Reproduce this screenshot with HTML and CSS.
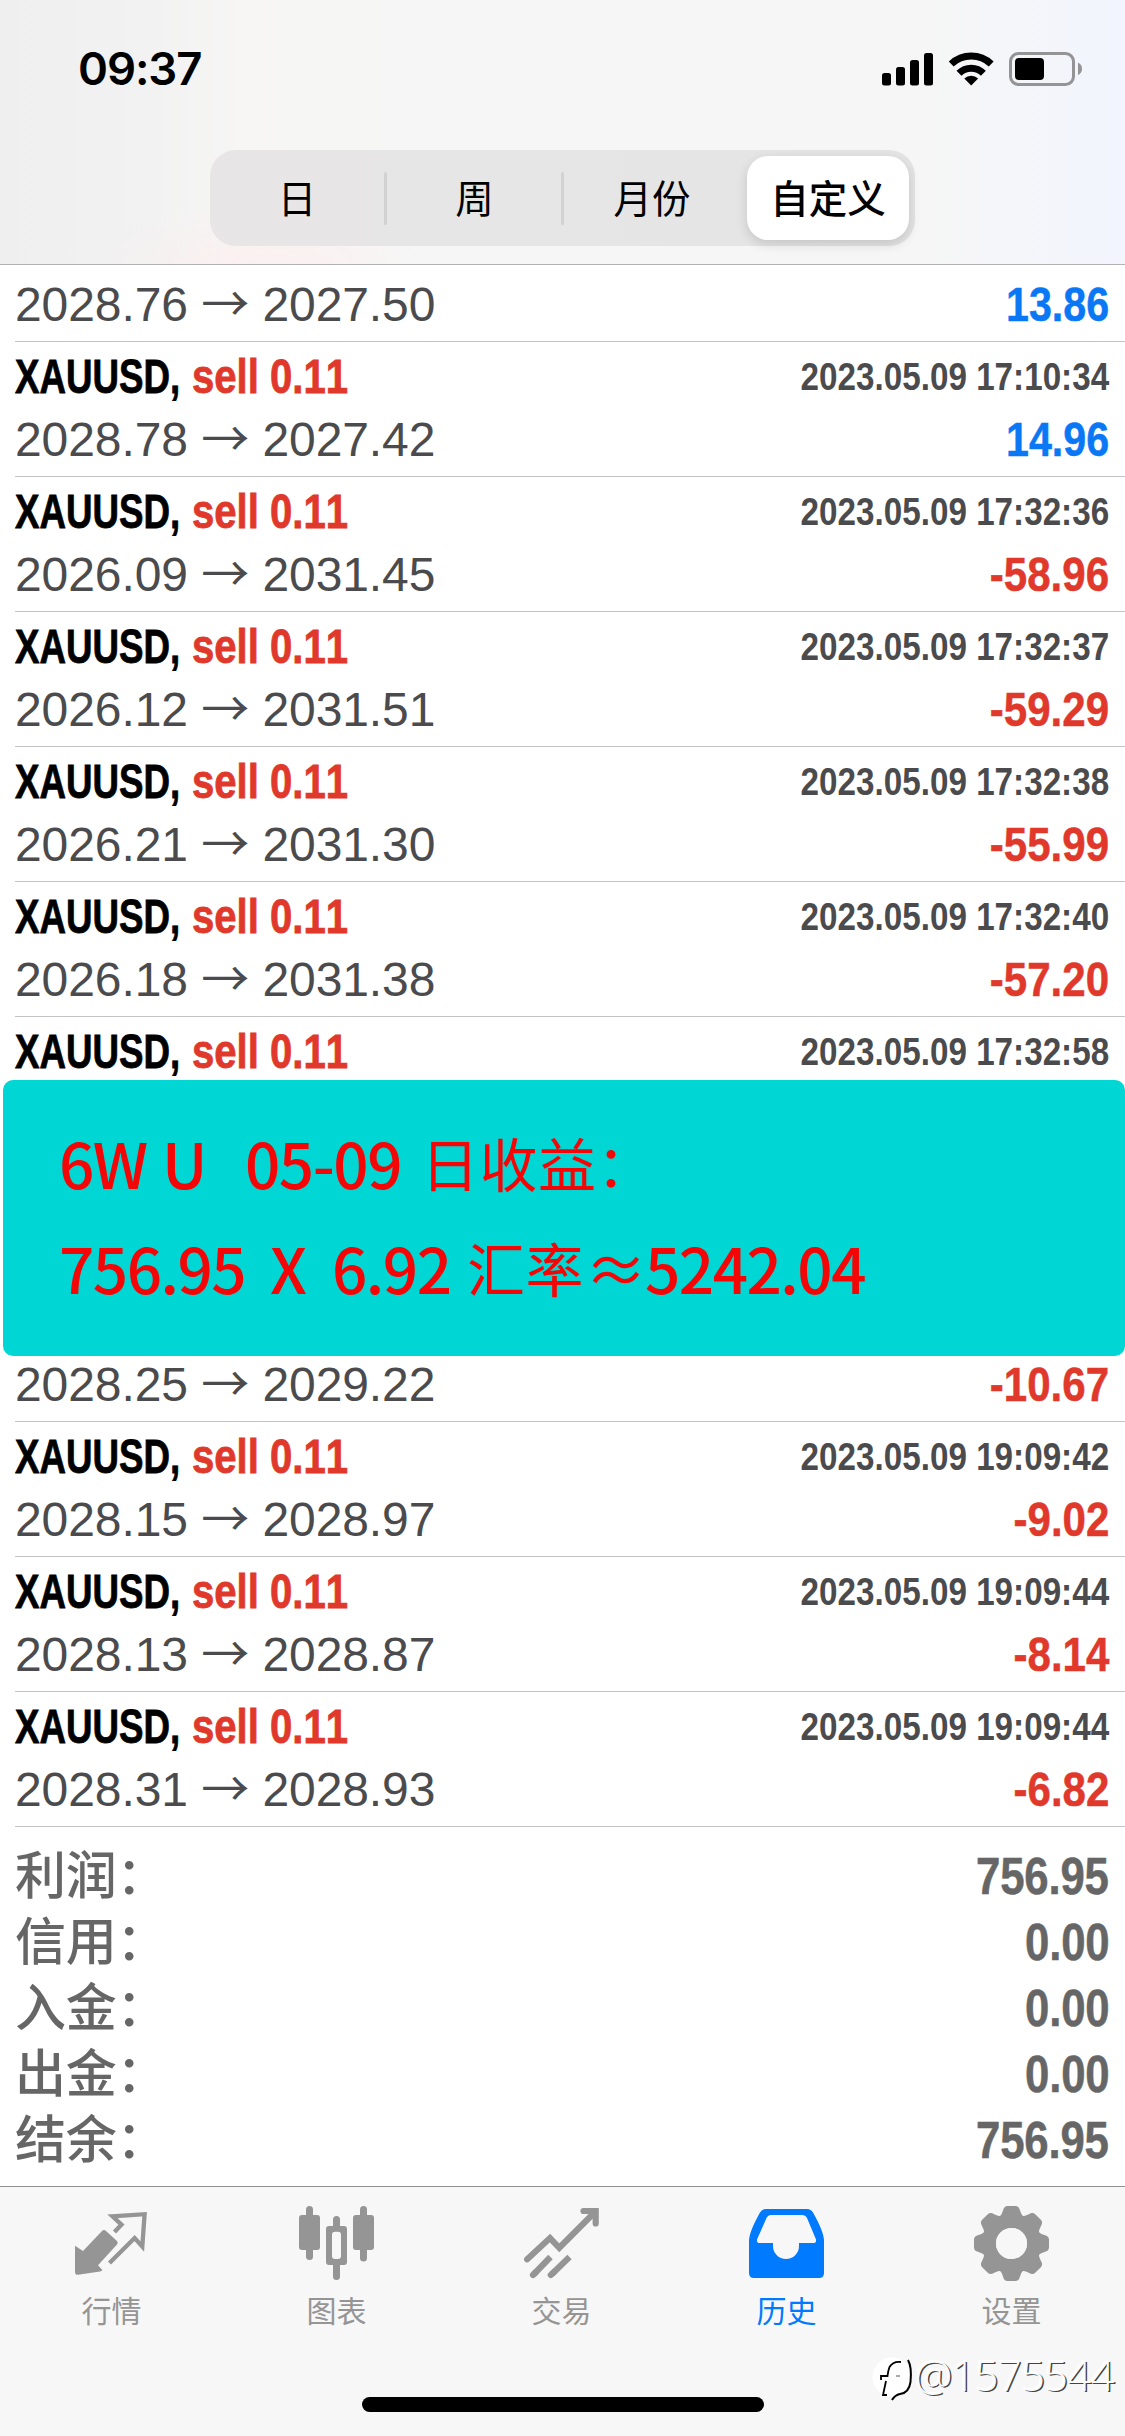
FILE: index.html
```html
<!DOCTYPE html>
<html lang="zh-CN">
<head>
<meta charset="utf-8">
<title>历史</title>
<link rel="stylesheet" href="styles.css">
</head>
<body>
<div class="screen">
  <header class="header">
    <div class="status">
      <span class="clock">09:37</span>
      <svg class="status-icons" width="202" height="36" viewBox="0 0 202 36">
        <g fill="#000">
          <rect x="0" y="22" width="9" height="12.500" rx="2.500"/>
          <rect x="14" y="16" width="9" height="18.500" rx="2.500"/>
          <rect x="28" y="9" width="9" height="25.500" rx="2.500"/>
          <rect x="42" y="2" width="9" height="32.500" rx="2.500"/>
          <path d="M89.200 34.500 L82.300 27.600 A10 10 0 0 1 96.100 27.600 Z"/>
        </g>
        <g fill="none" stroke="#000">
          <path d="M77 22.300 A17.300 17.300 0 0 1 101.400 22.300" stroke-width="7"/>
          <path d="M69.200 13 A29 29 0 0 1 109.200 13" stroke-width="7"/>
        </g>
        <rect x="128.500" y="2.500" width="63" height="31" rx="8" fill="none" stroke="#949496" stroke-width="3"/>
        <rect x="133" y="7" width="29" height="22" rx="4" fill="#000"/>
        <path d="M196 11.500 Q200 13.500 200 17.700 Q200 22 196 24 Z" fill="#949496"/>
      </svg>
    </div>
    <nav class="segments">
      <span class="segment day">日</span>
      <span class="segment divided">周</span>
      <span class="segment divided month">月份</span>
      <span class="segment selected">自定义</span>
    </nav>
  </header>

  <main class="history">
    <section class="deal tail-only first">
      <div class="line"><span class="prices">2028.76 <i>→</i> 2027.50</span><span class="profit up">13.86</span></div>
    </section>
    <section class="deal">
      <div class="line"><span class="symbol"><b>XAUUSD,</b></span><span class="side"><b>sell 0.11</b></span><time>2023.05.09 17:10:34</time></div>
      <div class="line"><span class="prices">2028.78 <i>→</i> 2027.42</span><span class="profit up">14.96</span></div>
    </section>
    <section class="deal">
      <div class="line"><span class="symbol"><b>XAUUSD,</b></span><span class="side"><b>sell 0.11</b></span><time>2023.05.09 17:32:36</time></div>
      <div class="line"><span class="prices">2026.09 <i>→</i> 2031.45</span><span class="profit down">-58.96</span></div>
    </section>
    <section class="deal">
      <div class="line"><span class="symbol"><b>XAUUSD,</b></span><span class="side"><b>sell 0.11</b></span><time>2023.05.09 17:32:37</time></div>
      <div class="line"><span class="prices">2026.12 <i>→</i> 2031.51</span><span class="profit down">-59.29</span></div>
    </section>
    <section class="deal">
      <div class="line"><span class="symbol"><b>XAUUSD,</b></span><span class="side"><b>sell 0.11</b></span><time>2023.05.09 17:32:38</time></div>
      <div class="line"><span class="prices">2026.21 <i>→</i> 2031.30</span><span class="profit down">-55.99</span></div>
    </section>
    <section class="deal">
      <div class="line"><span class="symbol"><b>XAUUSD,</b></span><span class="side"><b>sell 0.11</b></span><time>2023.05.09 17:32:40</time></div>
      <div class="line"><span class="prices">2026.18 <i>→</i> 2031.38</span><span class="profit down">-57.20</span></div>
    </section>
    <section class="deal head-only">
      <div class="line"><span class="symbol"><b>XAUUSD,</b></span><span class="side"><b>sell 0.11</b></span><time>2023.05.09 17:32:58</time></div>
    </section>

    <aside class="note">
      <div class="note-line">
        <span class="w-6w">6W</span><span class="w-u">U</span><span class="w-date">05-09</span><span class="han">日收益：</span>
      </div>
      <div class="note-line">
        <span class="w-sum">756.95</span><span class="w-x">X</span><span class="w-rate">6.92</span><span class="han w-han">汇率</span><span class="w-approx">≈</span><span>5242.04</span>
      </div>
    </aside>

    <section class="deal tail-only">
      <div class="line"><span class="prices">2028.25 <i>→</i> 2029.22</span><span class="profit down">-10.67</span></div>
    </section>
    <section class="deal">
      <div class="line"><span class="symbol"><b>XAUUSD,</b></span><span class="side"><b>sell 0.11</b></span><time>2023.05.09 19:09:42</time></div>
      <div class="line"><span class="prices">2028.15 <i>→</i> 2028.97</span><span class="profit down">-9.02</span></div>
    </section>
    <section class="deal">
      <div class="line"><span class="symbol"><b>XAUUSD,</b></span><span class="side"><b>sell 0.11</b></span><time>2023.05.09 19:09:44</time></div>
      <div class="line"><span class="prices">2028.13 <i>→</i> 2028.87</span><span class="profit down">-8.14</span></div>
    </section>
    <section class="deal">
      <div class="line"><span class="symbol"><b>XAUUSD,</b></span><span class="side"><b>sell 0.11</b></span><time>2023.05.09 19:09:44</time></div>
      <div class="line"><span class="prices">2028.31 <i>→</i> 2028.93</span><span class="profit down">-6.82</span></div>
    </section>

    <section class="summary">
      <div class="total"><span>利润：</span><span class="amount">756.95</span></div>
      <div class="total"><span>信用：</span><span class="amount">0.00</span></div>
      <div class="total"><span>入金：</span><span class="amount">0.00</span></div>
      <div class="total"><span>出金：</span><span class="amount">0.00</span></div>
      <div class="total"><span>结余：</span><span class="amount">756.95</span></div>
    </section>
  </main>

  <footer class="tabbar">
    <nav class="tabs">
      <a class="tab">
        <svg width="75" height="75" viewBox="0 0 75 75">
          <path d="M1 39.700 L9 45 L28 25 Q30 23 32 25 L43 35 Q44.500 36.700 43 38.500 L24 59.300 L28.300 64 Q28 65.300 26 65.500 L4 68.800 Q1 69 1 66 Z" fill="#959595"/>
          <path d="M40.500 26 L47.500 18.600 L38.500 10.300 L70.600 8.200 L68.300 40.500 L60.600 32 L35.500 57" fill="none" stroke="#959595" stroke-width="4.300"/>
        </svg>
        <span>行情</span>
      </a>
      <a class="tab">
        <svg width="75" height="75" viewBox="0 0 75 75" fill="#959595">
          <rect x="0" y="9" width="21" height="35" rx="3"/><rect x="7" y="0" width="7" height="54" rx="3.500"/>
          <rect x="54" y="9" width="21" height="35" rx="3"/><rect x="61" y="0" width="7" height="55.500" rx="3.500"/>
          <path d="M34 20 V13.500 a3.500 3.500 0 0 1 7 0 V20 H45 a3 3 0 0 1 3 3 V56 a3 3 0 0 1 -3 3 H41 V70.500 a3.500 3.500 0 0 1 -7 0 V59 H30 a3 3 0 0 1 -3 -3 V23 a3 3 0 0 1 3 -3 Z M36 25.700 a3 3 0 0 0 -3 3 V50 a3 3 0 0 0 3 3 H39 a3 3 0 0 0 3 -3 V28.700 a3 3 0 0 0 -3 -3 Z" fill-rule="evenodd"/>
        </svg>
        <span>图表</span>
      </a>
      <a class="tab">
        <svg width="75" height="75" viewBox="0 0 75 75" fill="none" stroke="#959595" stroke-width="6.200">
          <path d="M3.200 53.300 L26 32 L35.300 41.800 L71 6" stroke-linecap="round"/>
          <path d="M59.500 5 H71.700 V17.500" stroke-linecap="round"/>
          <path d="M26.500 51 L10 68" /><path d="M45.500 51 L28 68"/>
          <path d="M9 69 L12 66 M26.800 69 L30 66" stroke-linecap="round"/>
        </svg>
        <span>交易</span>
      </a>
      <a class="tab active">
        <svg width="75" height="75" viewBox="0 0 75 75">
          <path d="M17 3 H58 Q62 3 64 6.500 Q75 26 75 35 V67 Q75 72 70 72 H5 Q0 72 0 67 V35 Q0 26 11 6.500 Q13 3 17 3 Z M22 9 Q19 9 17.500 12 L8.200 33 Q7 37 11 37 H24 V40 A13 13 0 0 0 50 40 V37 H64 Q68 37 66.800 33 L58 12 Q56.500 9 53 9 Z" fill="#007aff" fill-rule="evenodd"/>
        </svg>
        <span>历史</span>
      </a>
      <a class="tab">
        <svg width="75" height="75" viewBox="-37.500 -37.500 75 75">
          <defs><path id="tooth" d="M-12.500 -26 Q-9.500 -29 -8.500 -33 Q-7.500 -37.500 -4 -37.500 H4 Q7.500 -37.500 8.500 -33 Q9.500 -29 12.500 -26 L0 -20 Z"/></defs>
          <g fill="#959595">
            <use href="#tooth"/><use href="#tooth" transform="rotate(45)"/><use href="#tooth" transform="rotate(90)"/><use href="#tooth" transform="rotate(135)"/>
            <use href="#tooth" transform="rotate(180)"/><use href="#tooth" transform="rotate(225)"/><use href="#tooth" transform="rotate(270)"/><use href="#tooth" transform="rotate(315)"/>
          </g>
          <circle r="22" fill="none" stroke="#959595" stroke-width="13"/>
          <circle r="15.500" fill="#f7f7f7"/>
        </svg>
        <span>设置</span>
      </a>
    </nav>
    <div class="home-indicator"></div>
    <div class="watermark">
      <svg width="43" height="52" viewBox="0 0 43 52">
        <circle cx="20" cy="22" r="19.500" fill="#fff"/>
        <path d="M29 7 Q21 6 17.500 12 Q16 16 15.500 21 H9 V25 M14 26 L11 40 H15" fill="none" stroke="#000" stroke-width="1.800"/>
        <path d="M36 5 Q40 12 38.500 27 Q37 38 28 39 Q23 40 20 45" fill="none" stroke="#000" stroke-width="2"/>
        <path d="M24 21 H28" stroke="#555" stroke-width="1"/>
      </svg>
      <span>@1575544</span>
    </div>
  </footer>
</div>
</body>
</html>
```
FILE: styles.css
```css
* { box-sizing: border-box; }

body {
  margin: 0;
  background: #fff;
  font-family: "Liberation Sans", "Noto Sans CJK SC", sans-serif;
}

.screen {
  width: 1125px;
  height: 2436px;
  display: flex;
  flex-direction: column;
  overflow: hidden;
}

/* Header */
.header {
  height: 265px;
  flex: none;
  border-bottom: 1px solid #b2b2b2;
  background:
    radial-gradient(ellipse 170px 60px at 260px 265px, rgba(255, 236, 236, .6), rgba(255, 236, 236, 0)),
    linear-gradient(90deg, #efefef 0, #f2f2f2 150px, #f7f6f5 250px, #f6f6f6 400px, #f6f6f6 930px, #f2f5fd 1110px);
}

.status {
  height: 150px;
  padding: 51px 41px 0 78px;
  display: flex;
  justify-content: space-between;
}

.clock {
  font: 600 45.500px/36px Inter, sans-serif;
  letter-spacing: -1.100px;
}

.segments {
  width: 705px;
  height: 96px;
  margin-left: 210px;
  padding: 6px;
  display: grid;
  grid-template-columns: 170px 177px 184px 162px;
  border-radius: 26px;
  background: linear-gradient(90deg, #e8e5e6, #e6e6e6 40%, #e4e4e5);
}

.segment {
  display: flex;
  align-items: center;
  justify-content: center;
  position: relative;
  padding-bottom: 4px;
  font: 400 38.500px/1 "Noto Sans CJK SC", sans-serif;
}

.day { padding-right: 8px; }
.month { padding-right: 6px; }

.divided::before {
  content: "";
  position: absolute;
  left: -2px;
  top: 16px;
  width: 3px;
  height: 53px;
  border-radius: 2px;
  background: #d2d2d3;
}

.selected {
  border-radius: 21px;
  background: #fff;
  font-weight: 500;
  box-shadow: 0 4px 12px rgba(0, 0, 0, .14);
}

/* Deals */
.history {
  height: 1921px;
  flex: none;
  overflow: hidden;
}

.deal {
  height: 135px;
  margin-left: 15px;
  padding: 3px 16px 0 0;
  border-bottom: 1px solid #c3c3c5;
}

.head-only { height: 63px; border-bottom: 0; }
.tail-only { height: 66px; padding-top: 0; }
.first { height: 77px; padding-top: 11px; }

.line {
  height: 62px;
  display: flex;
  line-height: 63px;
  font-size: 48px;
  white-space: nowrap;
}

.line + .line { line-height: 65px; }
.tail-only .line { height: 54px; line-height: 57px; }

.symbol b, .side b {
  display: inline-block;
  transform-origin: 0 0;
  font-kerning: none;
  -webkit-text-stroke: .8px currentColor;
}

.symbol { width: 177px; }
.symbol b { transform: scaleX(.765); }
.side { width: 160px; color: #e0392c; }
.side b { transform: scaleX(.835); }

time {
  margin-left: auto;
  color: #4b4b4d;
  font-size: 39px;
  font-weight: 700;
  transform: scaleX(.852);
  transform-origin: 100% 0;
}

.prices { color: #4b4b4d; letter-spacing: -.080px; }

.prices i {
  font-family: "Noto Sans CJK SC", sans-serif;
  font-style: normal;
  line-height: 0;
}

.profit, .amount {
  margin-left: auto;
  font-weight: 700;
  transform: scaleX(.858);
  transform-origin: 100% 0;
  -webkit-text-stroke: .5px currentColor;
}

.up { color: #0a78f5; }
.down { color: #e0392c; transform: scaleX(.877); }

/* Note panel */
.note {
  height: 276px;
  margin-left: 3px;
  padding: 30px 0 0 56px;
  border-radius: 10px;
  background: #00d7d5;
  color: #f40606;
  font: 500 62px/105px "Noto Sans CJK SC", sans-serif;
  letter-spacing: -1.500px;
}

.note-line {
  height: 105px;
  display: flex;
  white-space: nowrap;
}

.han { font-size: 58px; font-weight: 400; letter-spacing: .5px; }
.w-6w { width: 103px; }
.w-u { width: 83px; }
.w-date { width: 176px; }
.w-sum { width: 211px; }
.w-x { width: 62px; }
.w-rate { width: 135px; }
.w-han { width: 118px; }
.w-approx { width: 60px; font-weight: 400; }

/* Totals */
.summary {
  padding: 17px 16px 0 15px;
  color: #666;
}

.total {
  height: 66px;
  display: flex;
  font-size: 51px;
  font-weight: 500;
  line-height: 66px;
  letter-spacing: -.2px;
}

/* Tab bar */
.tabbar {
  height: 250px;
  flex: none;
  position: relative;
  border-top: 1px solid #929294;
  background: #f7f7f7;
}

.tabs {
  padding-top: 19px;
  margin: 0 1px 0 -1px;
  display: grid;
  grid-template-columns: repeat(5, 225px);
}

.tab {
  display: flex;
  flex-direction: column;
  align-items: center;
  gap: 6px;
  color: #959595;
  font: 400 30px/44px "Noto Sans CJK SC", sans-serif;
}

.tab svg { display: block; }
.active { color: #007aff; }

.home-indicator {
  width: 402px;
  height: 15px;
  margin: 66px auto 0;
  border-radius: 8px;
  background: #000;
}

.watermark {
  position: absolute;
  left: 872px;
  top: 168px;
  display: flex;
  color: #fbfbfb;
  font: 300 42px/39px "Open Sans", sans-serif;
  letter-spacing: -.8px;
  text-shadow: 1.500px 1px 0 #444, -1px -1px 0 #fff;
}
```
